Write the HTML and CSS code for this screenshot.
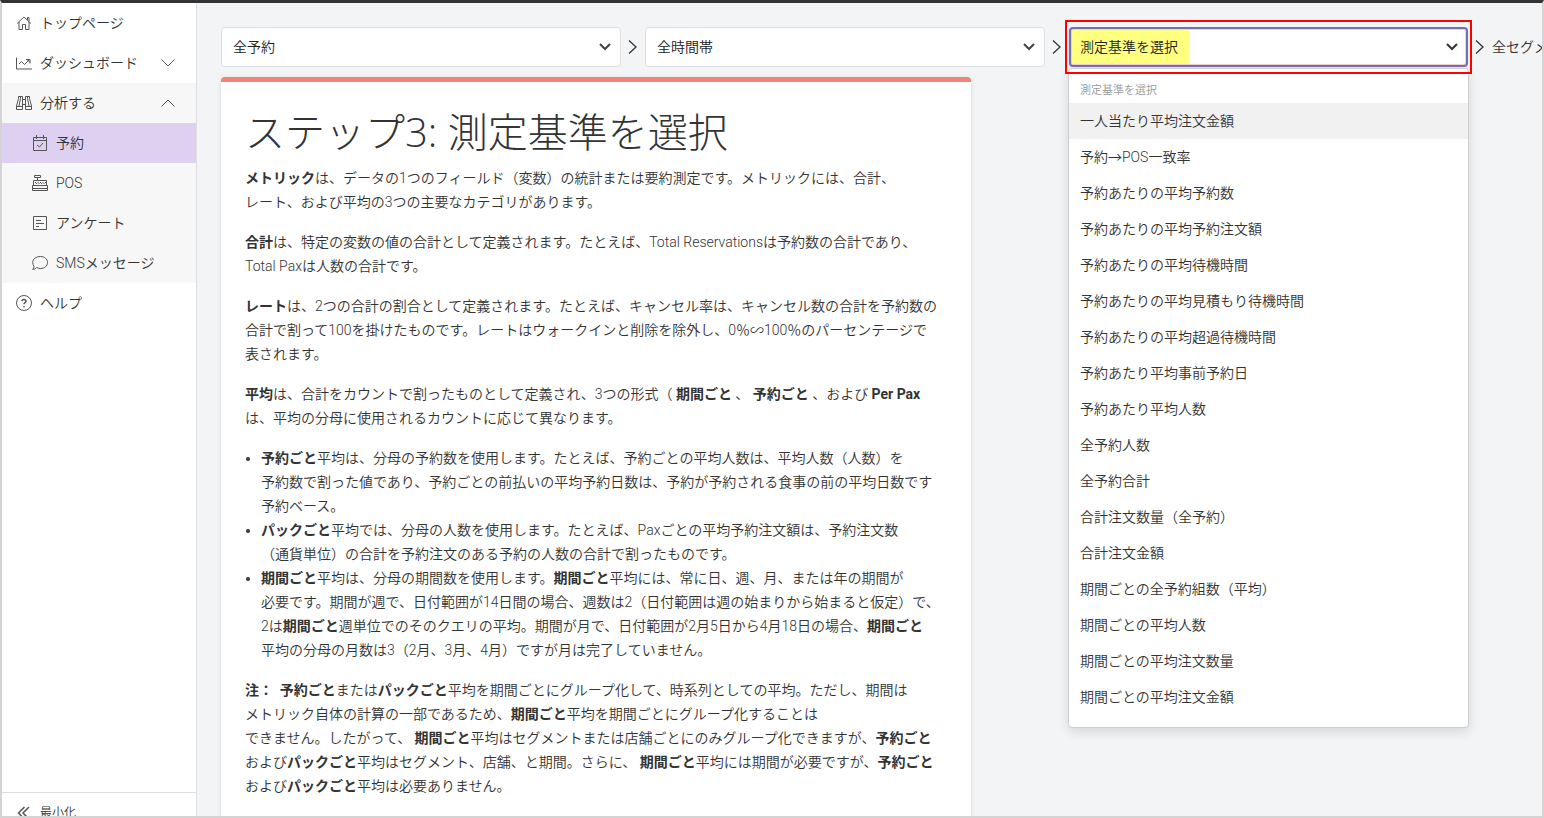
FILE: index.html
```html
<!DOCTYPE html>
<html lang="ja">
<head>
    <meta charset="UTF-8">
    <meta name="viewport" content="width=device-width, initial-scale=1.0">
    <title>分析する - 予約</title>
    <link rel="stylesheet" href="styles.css">
</head>
<body>
    <div class="app">
        <nav class="sidebar">
            <div class="menu">
                <a href="#" class="item">
                    <svg class="icon" viewBox="0 0 16 16"><path d="M1 8.500 8 2l7 6.500M11.500 5V2.500h1.500v4M3 7v7.500h3.500V9.500h3v5H13V7"/></svg>
                    トップページ
                </a>
                <a href="#" class="item">
                    <svg class="icon" viewBox="0 0 16 16"><path d="M.5 2.500v11.500H16M3 9l2.500-2.500 3 3L13.500 4.500M10 4.500h4v4M11 4.500l3 3"/></svg>
                    ダッシュボード
                    <svg class="arrow" viewBox="0 0 14 8"><path d="M.5.5 7 7 13.500.5"/></svg>
                </a>
                <div class="group">
                    <a href="#" class="item">
                        <svg class="icon" viewBox="0 0 16 16"><path d="M2.500 3.500.5 11v3.500h6v-13h-4v2M13.500 3.500l2 7.500v3.500h-6v-13h4v2M4.500 1.500v2L3 11M11.500 1.500v2L13 11M.5 11.500h6M9.500 11.500h6M6.500 4.500h3M6.500 9.500h3"/></svg>
                        分析する
                        <svg class="arrow" viewBox="0 0 14 8"><path d="M.5 7.500 7 1l6.500 6.500"/></svg>
                    </a>
                    <a href="#" class="item sub active">
                        <svg class="icon" viewBox="0 0 16 16"><path d="M1.500 2.500h13v13h-13zM1.500 5.500h13M4.500 0v4M11.500 0v4M5 10l2.500 2 3.500-4"/></svg>
                        予約
                    </a>
                    <a href="#" class="item sub">
                        <svg class="icon" viewBox="0 0 16 16"><path d="M2.500.5h6v2h-6zM5.500 2.500v3M1.500 5.500h13v5h-13zM.5 10.500h15v5H.5zM.5 13.500h15M3 7.500h1m1.500 0h1m1.500 0h1m1.500 0h1m1.500 0h1M4 8.500h1m1.500 0h1m1.500 0h1m1.500 0h1"/></svg>
                        POS
                    </a>
                    <a href="#" class="item sub">
                        <svg class="icon" viewBox="0 0 16 16"><path d="M1.500 1.500h13v13h-13zM4 5.500h5M4 8.500h8M4 11.500h3"/></svg>
                        アンケート
                    </a>
                    <a href="#" class="item sub">
                        <svg class="icon" viewBox="0 0 16 16"><path d="M8.500 1.500c4 0 7 2.500 7 6s-3 6-7 6c-1.500 0-2.700-.3-3.800-1C3.500 13.800 2 14.500.7 14.500c.8-1 1.300-2 1.300-3.200C1.200 10.200.7 9 .7 7.500c0-3.500 3.300-6 7.800-6z"/></svg>
                        SMSメッセージ
                    </a>
                </div>
                <a href="#" class="item">
                    <svg class="icon" viewBox="0 0 16 16"><circle cx="8" cy="8" r="7.500"/><path class="bold" d="M6 6.300C6 5 6.800 4.400 8 4.400s2 .7 2 1.800C10 7.600 8 7.600 8 9.300M8 11v1.300"/></svg>
                    ヘルプ
                </a>
            </div>
            <button type="button" class="item minimize">
                <svg class="icon" viewBox="0 0 16 16"><path class="bold" d="M8.500 2 2.500 8l6 6M13 2 7 8l6 6"/></svg>
                最小化
            </button>
        </nav>

        <main class="content">
            <div class="filters">
                <select class="select" aria-label="予約">
                    <option>全予約</option>
                </select>
                <svg class="next" viewBox="0 0 9 14"><path d="M1 .5 8 7l-7 6.500"/></svg>
                <select class="select" aria-label="時間帯">
                    <option>全時間帯</option>
                </select>
                <svg class="next" viewBox="0 0 9 14"><path d="M1 .5 8 7l-7 6.500"/></svg>
                <div class="metric">
                    <select class="select focused" aria-label="測定基準">
                        <option>測定基準を選択</option>
                    </select>
                    <div class="dropdown">
                        <div class="dropdown-title" id="metricTitle">測定基準を選択</div>
                        <ul role="listbox" aria-labelledby="metricTitle">
                            <li role="option" class="hover">一人当たり平均注文金額</li>
                            <li role="option">予約→POS一致率</li>
                            <li role="option">予約あたりの平均予約数</li>
                            <li role="option">予約あたりの平均予約注文額</li>
                            <li role="option">予約あたりの平均待機時間</li>
                            <li role="option">予約あたりの平均見積もり待機時間</li>
                            <li role="option">予約あたりの平均超過待機時間</li>
                            <li role="option">予約あたり平均事前予約日</li>
                            <li role="option">予約あたり平均人数</li>
                            <li role="option">全予約人数</li>
                            <li role="option">全予約合計</li>
                            <li role="option">合計注文数量（全予約）</li>
                            <li role="option">合計注文金額</li>
                            <li role="option">期間ごとの全予約組数（平均）</li>
                            <li role="option">期間ごとの平均人数</li>
                            <li role="option">期間ごとの平均注文数量</li>
                            <li role="option">期間ごとの平均注文金額</li>
                        </ul>
                    </div>
                </div>
                <svg class="next" viewBox="0 0 9 14"><path d="M1 .5 8 7l-7 6.500"/></svg>
                <span class="segment">全セグメント</span>
            </div>

            <article class="card">
                <h1>ステップ3: 測定基準を選択</h1>
                <p><b>メトリック</b>は、データの1つのフィールド（変数）の統計または要約測定です。メトリックには、合計、<br>レート、および平均の3つの主要なカテゴリがあります。</p>
                <p><b>合計</b>は、特定の変数の値の合計として定義されます。たとえば、Total Reservationsは予約数の合計であり、<br>Total Paxは人数の合計です。</p>
                <p><b>レート</b>は、2つの合計の割合として定義されます。たとえば、キャンセル率は、キャンセル数の合計を予約数の<br>合計で割って100を掛けたものです。レートはウォークインと削除を除外し、0％∽100％のパーセンテージで<br>表されます。</p>
                <p><b>平均</b>は、合計をカウントで割ったものとして定義され、3つの形式（ <b>期間ごと</b> 、 <b>予約ごと</b> 、および <b>Per Pax</b><br>は、平均の分母に使用されるカウントに応じて異なります。</p>
                <ul>
                    <li><b>予約ごと</b>平均は、分母の予約数を使用します。たとえば、予約ごとの平均人数は、平均人数（人数）を<br>予約数で割った値であり、予約ごとの前払いの平均予約日数は、予約が予約される食事の前の平均日数です<br>予約ベース。</li>
                    <li><b>パックごと</b>平均では、分母の人数を使用します。たとえば、Paxごとの平均予約注文額は、予約注文数<br>（通貨単位）の合計を予約注文のある予約の人数の合計で割ったものです。</li>
                    <li><b>期間ごと</b>平均は、分母の期間数を使用します。<b>期間ごと</b>平均には、常に日、週、月、または年の期間が<br>必要です。期間が週で、日付範囲が14日間の場合、週数は2（日付範囲は週の始まりから始まると仮定）で、<br>2は<b>期間ごと</b>週単位でのそのクエリの平均。期間が月で、日付範囲が2月5日から4月18日の場合、<b>期間ごと</b><br>平均の分母の月数は3（2月、3月、4月）ですが月は完了していません。</li>
                </ul>
                <p><b>注：</b> &nbsp;<b>予約ごと</b>または<b>パックごと</b>平均を期間ごとにグループ化して、時系列としての平均。ただし、期間は<br>メトリック自体の計算の一部であるため、<b>期間ごと</b>平均を期間ごとにグループ化することは<br>できません。したがって、 <b>期間ごと</b>平均はセグメントまたは店舗ごとにのみグループ化できますが、<b>予約ごと</b><br>および<b>パックごと</b>平均はセグメント、店舗、と期間。さらに、 <b>期間ごと</b>平均には期間が必要ですが、<b>予約ごと</b><br>および<b>パックごと</b>平均は必要ありません。</p>
            </article>
        </main>
    </div>
</body>
</html>
```
FILE: styles.css
```css
* {
    box-sizing: border-box;
}
body {
    margin: 0;
    font-family: Roboto, "Noto Sans CJK JP", sans-serif;
    font-size: 14px;
    font-weight: 350;
    line-height: 24px;
    color: #333;
}
.app {
    display: flex;
    height: 100vh;
    overflow: hidden;
    background: #f3f4f6;
    border: 2px solid #d4d4d4;
    border-top: 3px solid #333;
}
ul {
    margin: 0;
    padding: 0;
}

/* sidebar */
.sidebar {
    flex: 0 0 195px;
    display: flex;
    flex-direction: column;
    background: #fff;
    border-right: 1px solid #e0e0e2;
}
.menu {
    flex: 1;
    min-height: 0;
}
.item {
    display: flex;
    align-items: center;
    gap: 8px;
    height: 40px;
    padding: 0 21px 0 14px;
    color: #333;
    text-decoration: none;
    white-space: nowrap;
}
.group {
    background: #f7f7f7;
}
.sub {
    padding-left: 30px;
}
.active {
    background: #ddd0f0;
}
.minimize {
    flex: none;
    width: 100%;
    margin-bottom: -16px;
    border: 0;
    border-top: 1px solid #dddde0;
    background: #fff;
    font: inherit;
    font-size: 12px;
}
svg {
    flex: none;
    fill: none;
    stroke: #555;
    stroke-width: 1;
}
.icon {
    width: 16px;
    height: 16px;
}
.bold {
    stroke-width: 1.5;
}
.arrow {
    width: 14px;
    height: 8px;
    margin-left: auto;
}

/* filter bar */
.content {
    flex: 1;
    min-width: 0;
    padding: 24px 0 0 24px;
    overflow: hidden;
}
.filters {
    display: flex;
    align-items: center;
    margin-bottom: 10px;
}
.select {
    flex: none;
    width: 400px;
    height: 40px;
    padding: 0 11px;
    border: 1px solid #dcdfe0;
    border-radius: 4px;
    appearance: none;
    background: #fff url("data:image/svg+xml,%3Csvg xmlns='http://www.w3.org/2000/svg' width='12' height='8' fill='none' stroke='%23444' stroke-width='2'%3E%3Cpath d='M1 1l5 5 5-5'/%3E%3C/svg%3E") no-repeat right 9px center;
    font: inherit;
    color: #222;
}
.next {
    width: 9px;
    height: 14px;
    margin: 0 8px 0 7px;
    stroke: #333;
    stroke-width: 1.3;
}
.metric {
    position: relative;
    flex: none;
}
.metric::after {
    content: "";
    position: absolute;
    inset: -7px -4px;
    border: 2px solid #f00;
    pointer-events: none;
}
.focused {
    display: block;
    width: 399px;
    padding: 0 9px;
    border: 2px solid #7070b8;
    background-image: url("data:image/svg+xml,%3Csvg xmlns='http://www.w3.org/2000/svg' width='12' height='8' fill='none' stroke='%23333' stroke-width='2'%3E%3Cpath d='M1 1l5 5 5-5'/%3E%3C/svg%3E"), linear-gradient(#ffff80, #ffff80);
    background-size: auto, 118px 100%;
    background-position: right 8px center, left top;
    background-repeat: no-repeat;
    box-shadow: inset 0 0 0 1px #f3cfd0;
}
.dropdown {
    position: absolute;
    top: 41px;
    left: -1px;
    right: -1px;
    padding: 10px 0 12px;
    background: #fff;
    border: 1px solid #cccfd2;
    border-radius: 4px;
    box-shadow: 0 4px 12px rgba(0, 0, 0, 0.12);
}
.dropdown-title {
    padding: 0 11px;
    font-size: 11px;
    color: #999;
}
.dropdown li {
    padding: 6px 11px;
    list-style: none;
}
.dropdown .hover {
    background: #f1f1f1;
}
.segment {
    white-space: nowrap;
}

/* article */
.card {
    width: 750px;
    min-height: 100%;
    padding: 24px;
    background: #fff;
    border-top: 5px solid #f08478;
    border-radius: 4px;
    box-shadow: 0 1px 4px rgba(0, 0, 0, 0.12);
    white-space: nowrap;
}
h1 {
    margin: 0 0 8px;
    font-family: "Open Sans", "Noto Sans CJK JP", sans-serif;
    font-size: 40px;
    font-weight: 300;
    line-height: 52px;
}
.card p {
    margin: 0 0 16px;
}
.card ul {
    margin-bottom: 16px;
    padding-left: 16px;
}
```
